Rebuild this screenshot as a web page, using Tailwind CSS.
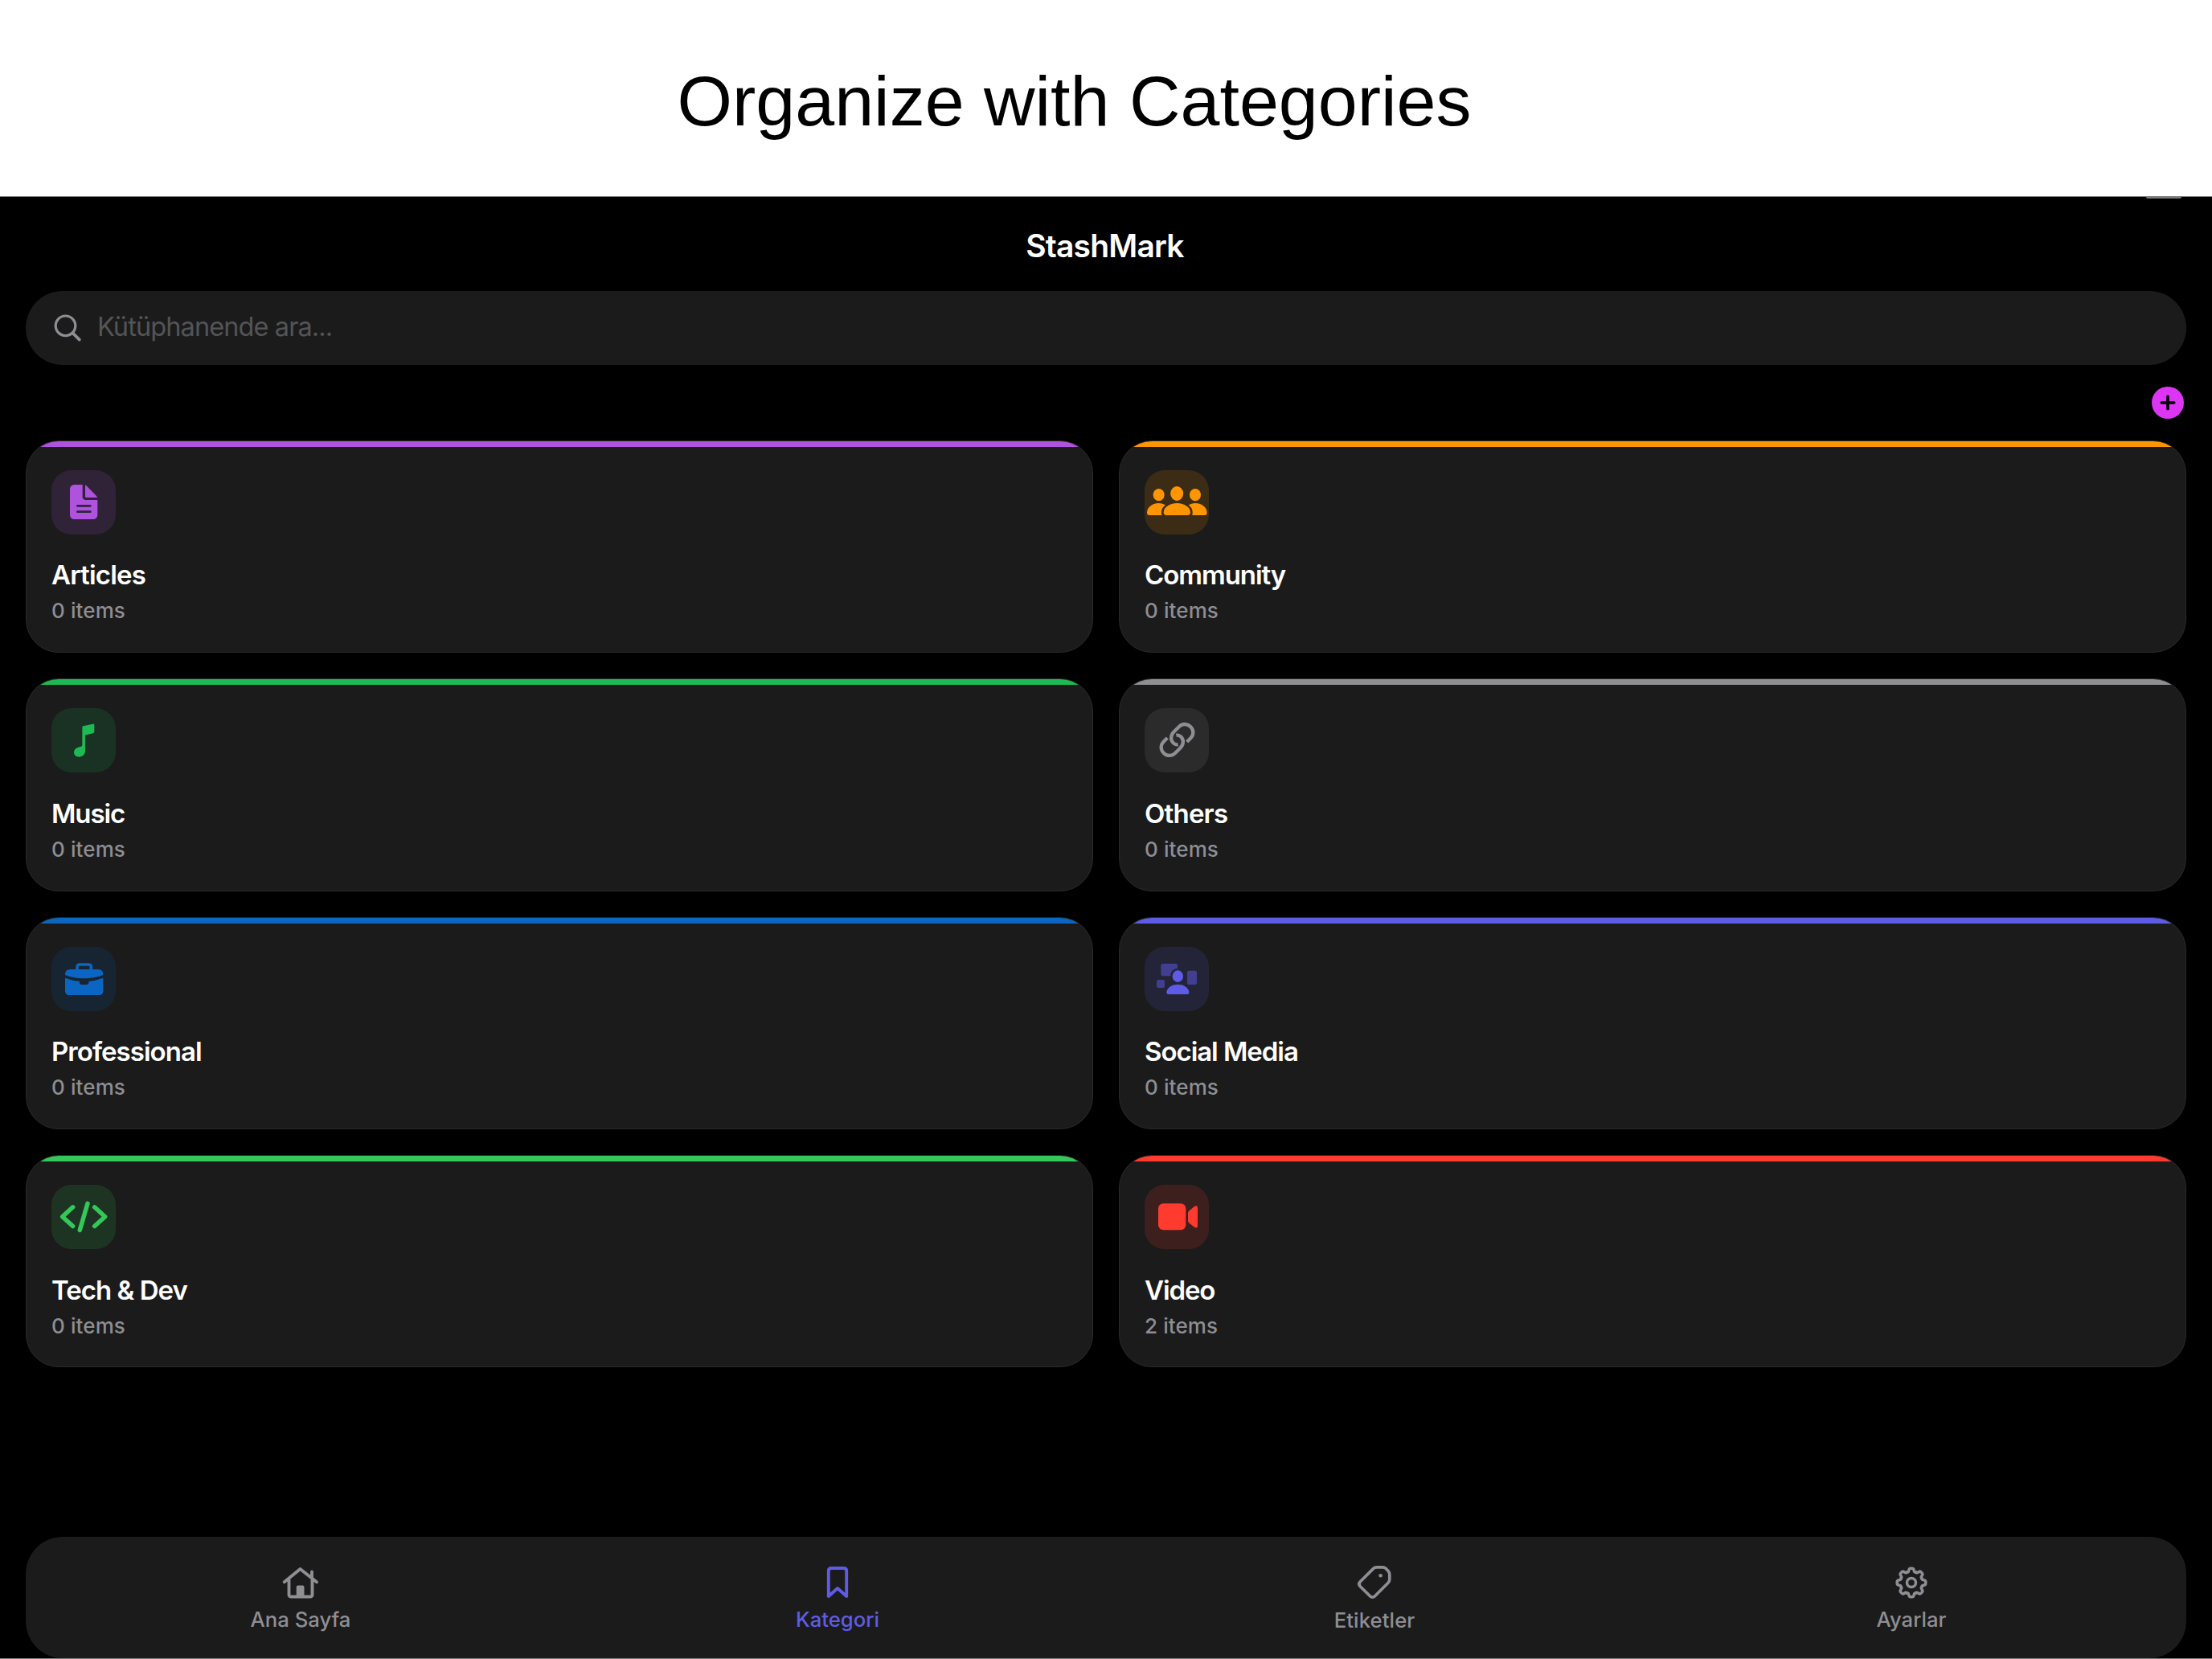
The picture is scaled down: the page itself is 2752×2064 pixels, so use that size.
<!DOCTYPE html>
<html lang="tr">
<head>
<meta charset="utf-8">
<title>StashMark</title>
<script src="https://cdn.jsdelivr.net/npm/@tailwindcss/browser@4"></script>
</head>
<body class="bg-black">
<div class="flex h-[2064px] w-[2752px] flex-col overflow-hidden bg-black font-[Inter,sans-serif] text-white">
  <header class="flex h-[244px] shrink-0 bg-white pt-[76px] pl-[842.5px]">
    <h1 class="font-['Liberation_Sans',sans-serif] text-[88px] leading-[100px] whitespace-nowrap text-black">Organize with Categories</h1>
  </header>
  <div class="flex h-[117.5px] shrink-0 flex-col border-t border-[#7f7f7f]">
    <div class="mr-[38px] h-[2px] w-[44px] shrink-0 self-end rounded-b-[2px] bg-[#7b7b7b]"></div>
    <div class="flex justify-center pt-[35px] pr-[3px] text-[39px] leading-[48px] font-semibold tracking-[-0.8px]">StashMark</div>
  </div>
  <div class="mx-8 flex h-[92px] shrink-0 items-center rounded-[46px] bg-[#1b1b1b] pl-8">
    <svg class="h-[40px] w-[40px]" viewBox="64 388 40 40" fill="none" stroke="#8e8e93" stroke-width="3.2" stroke-linecap="round"><circle cx="81.5" cy="405.3" r="12.3"/><path d="M90.5 414.3 98.8 422.6" stroke-width="3.8"/></svg>
    <span class="-mt-[2px] ml-[17px] text-[32.5px] leading-[40px] tracking-[-0.9px] text-[#545457]">Kütüphanende ara...</span>
  </div>
  <div class="flex h-[94.4px] shrink-0 justify-end pt-[27px] pr-[35px]">
    <svg class="h-[40px] w-[40px]" viewBox="0 0 40 40"><circle cx="20" cy="20" r="20" fill="#dd35f5"/><path d="M20 12.2V27.8M12.2 20H27.8" stroke="#000" stroke-width="3.6" stroke-linecap="round"/></svg>
  </div>
  <main class="mx-8 grid shrink-0 auto-rows-[264.4px] grid-cols-2 gap-8">
    <section class="overflow-hidden rounded-[41px] border border-[#2a2a2b] bg-[#1b1b1b]">
      <div class="h-[7px] bg-[#af52de]"></div>
      <div class="px-[31px] pt-[29px]">
        <div class="h-20 w-20 rounded-[25px] bg-[#af52de]/15">
          <svg class="h-20 w-20" viewBox="132 135 240 240" fill="#af52de"><path d="M248 189H217A16 16 0 0 0 201 205V302A16 16 0 0 0 217 318H288A16 16 0 0 0 304 302V246H260A11 11 0 0 1 248 235Z"/><path d="M258 192Q258 189 261 191L302 233Q305 237 301 237H262Q258 237 258 233Z"/><path d="M229 268H277M229 290H277" stroke="#312338" stroke-width="8" stroke-linecap="round"/></svg>
        </div>
        <h2 class="mt-[30.5px] text-[33px] leading-[40px] font-semibold tracking-[-0.8px]">Articles</h2>
        <p class="mt-[8.5px] text-[26px] leading-[32px] font-medium tracking-[0.1px] text-[#8e8e93]">0 items</p>
      </div>
    </section>
    <section class="overflow-hidden rounded-[41px] border border-[#2a2a2b] bg-[#1b1b1b]">
      <div class="h-[7px] bg-[#ff9500]"></div>
      <div class="px-[31px] pt-[29px]">
        <div class="h-20 w-20 rounded-[25px] bg-[#ff9500]/15">
          <svg class="h-20 w-20" viewBox="132 135 240 240" fill="#ff9500"><ellipse cx="252.5" cy="222" rx="24" ry="27"/><ellipse cx="185" cy="227" rx="21" ry="23"/><ellipse cx="321" cy="227" rx="21" ry="23"/><path d="M203 292C203 274 225 258 253 258C281 258 303 274 303 292C303 299 299 303 293 303H213C207 303 203 299 203 292Z"/><path d="M141 294C141 276 158 258 185 258C195 258 203 261 210 265C198 274 192 286 196 303H150C144 303 141 300 141 294Z"/><path d="M365 294C365 276 348 258 321 258C311 258 303 261 296 265C308 274 314 286 310 303H356C362 303 365 300 365 294Z"/></svg>
        </div>
        <h2 class="mt-[30.5px] text-[33px] leading-[40px] font-semibold tracking-[-1.05px]">Community</h2>
        <p class="mt-[8.5px] text-[26px] leading-[32px] font-medium tracking-[0.1px] text-[#8e8e93]">0 items</p>
      </div>
    </section>
    <section class="overflow-hidden rounded-[41px] border border-[#2a2a2b] bg-[#1b1b1b]">
      <div class="h-[7px] bg-[#1db954]"></div>
      <div class="px-[31px] pt-[29px]">
        <div class="h-20 w-20 rounded-[25px] bg-[#1db954]/15">
          <svg class="h-20 w-20" viewBox="132 136 240 240" fill="#1db954"><path d="M247 208Q247 204 251 203L286 195Q292 194 292 199V224Q292 229 287 230L258 237V296C258 310 247 318 235 318C223 318 216 310 216 301C216 291 223 285 232 282L243 279Q247 278 247 273Z"/></svg>
        </div>
        <h2 class="mt-[31px] text-[33px] leading-[40px] font-semibold tracking-[-1.1px]">Music</h2>
        <p class="mt-[8.5px] text-[26px] leading-[32px] font-medium tracking-[0.1px] text-[#8e8e93]">0 items</p>
      </div>
    </section>
    <section class="overflow-hidden rounded-[41px] border border-[#2a2a2b] bg-[#1b1b1b]">
      <div class="h-[7px] bg-[#8e8e93]"></div>
      <div class="px-[31px] pt-[29px]">
        <div class="h-20 w-20 rounded-[25px] bg-[#8e8e93]/15">
          <svg class="h-20 w-20" viewBox="132 136 240 240" fill="none" stroke="#8e8e93" stroke-width="13"><path d="M290 262 304 248C316 236 316 218 304 206C292 193 273 193 261 205L242 224C228 238 228 256 240 267C245 271 250 273 257 272"/><path d="M217 247 203 261C191 273 191 291 203 303C215 316 234 316 246 304L265 285C279 271 279 253 267 242C262 238 257 236 250 237"/></svg>
        </div>
        <h2 class="mt-[31px] text-[33px] leading-[40px] font-semibold tracking-[-0.8px]">Others</h2>
        <p class="mt-[8.5px] text-[26px] leading-[32px] font-medium tracking-[0.1px] text-[#8e8e93]">0 items</p>
      </div>
    </section>
    <section class="overflow-hidden rounded-[41px] border border-[#2a2a2b] bg-[#1b1b1b]">
      <div class="h-[7px] bg-[#0a66c2]"></div>
      <div class="px-[31px] pt-[29px]">
        <div class="h-20 w-20 rounded-[25px] bg-[#0a66c2]/15">
          <svg class="h-20 w-20" viewBox="132 138 240 240" fill="#0a66c2"><path d="M228 224V213Q228 204 238 204H270Q280 204 280 213V224" fill="none" stroke="#0a66c2" stroke-width="11"/><path d="M183 243V240Q184 222 202 222H306Q324 222 325 240V243Q290 256 253.5 256Q217 256 183 243Z"/><path d="M183 254Q210 264 237 267V271Q237 279 245 279H263Q271 279 271 271V267Q298 264 325 254V302Q325 318 309 318H199Q183 318 183 302Z"/></svg>
        </div>
        <h2 class="mt-[30.5px] text-[33px] leading-[40px] font-semibold tracking-[-0.95px]">Professional</h2>
        <p class="mt-[8.5px] text-[26px] leading-[32px] font-medium tracking-[0.1px] text-[#8e8e93]">0 items</p>
      </div>
    </section>
    <section class="overflow-hidden rounded-[41px] border border-[#2a2a2b] bg-[#1b1b1b]">
      <div class="h-[7px] bg-[#5e5ce6]"></div>
      <div class="px-[31px] pt-[29px]">
        <div class="h-20 w-20 rounded-[25px] bg-[#5e5ce6]/15">
          <svg class="h-20 w-20" viewBox="132 138 240 240" fill="#5e5ce6"><g fill="#423f90"><rect x="193" y="201" width="62" height="46" rx="7"/><rect x="291" y="227" width="36" height="52" rx="7"/><rect x="177" y="261" width="30" height="30" rx="7"/></g><ellipse cx="256" cy="248" rx="28" ry="30" fill="#252339"/><ellipse cx="256" cy="248" rx="20" ry="22"/><path d="M214 305C218 288 236 278 256 278C276 278 294 288 298 305Q299 315 290 315H223Q213 315 214 305Z"/></svg>
        </div>
        <h2 class="mt-[30.5px] text-[33px] leading-[40px] font-semibold tracking-[-1.05px]">Social Media</h2>
        <p class="mt-[8.5px] text-[26px] leading-[32px] font-medium tracking-[0.1px] text-[#8e8e93]">0 items</p>
      </div>
    </section>
    <section class="overflow-hidden rounded-[41px] border border-[#2a2a2b] bg-[#1b1b1b]">
      <div class="h-[7px] bg-[#34c759]"></div>
      <div class="px-[31px] pt-[29px]">
        <div class="h-20 w-20 rounded-[25px] bg-[#34c759]/15">
          <svg class="h-20 w-20" viewBox="132 132.5 240 240" fill="none" stroke="#34c759" stroke-width="16.5" stroke-linecap="round" stroke-linejoin="round"><path d="M212 216 173 251.500 212 287M267 202.500 238 301.500M293 216 332 251.500 293 287"/></svg>
        </div>
        <h2 class="mt-[31px] text-[33px] leading-[40px] font-semibold tracking-[-1px]">Tech &amp; Dev</h2>
        <p class="mt-[8.5px] text-[26px] leading-[32px] font-medium tracking-[0.1px] text-[#8e8e93]">0 items</p>
      </div>
    </section>
    <section class="overflow-hidden rounded-[41px] border border-[#2a2a2b] bg-[#1b1b1b]">
      <div class="h-[7px] bg-[#ff3b30]"></div>
      <div class="px-[31px] pt-[29px]">
        <div class="h-20 w-20 rounded-[25px] bg-[#ff3b30]/15">
          <svg class="h-20 w-20" viewBox="132 132.5 240 240" fill="#ff3b30"><rect x="183" y="202" width="103" height="99" rx="19"/><path d="M294 238Q294 233 298 230L317 214Q330 206 330 220V284Q330 298 317 290L298 275Q294 272 294 267Z"/></svg>
        </div>
        <h2 class="mt-[31px] text-[33px] leading-[40px] font-semibold tracking-[-1.1px]">Video</h2>
        <p class="mt-[8.5px] text-[26px] leading-[32px] font-medium tracking-[0.1px] text-[#8e8e93]">2 items</p>
      </div>
    </section>
  </main>
  <nav class="mx-8 mt-auto grid h-[151px] shrink-0 grid-cols-4 rounded-[46px] bg-[#1b1b1b] px-2 pt-[28px] text-[25.7px] leading-[32px] font-medium text-[#8e8e93]">
    <a class="flex flex-col items-center"><svg class="h-[60px] w-[60px]" viewBox="344 1940 60 60" fill="none" stroke="#8e8e93" stroke-width="3.9" stroke-linecap="round" stroke-linejoin="round"><path d="M353.700 1968.300 373.500 1952 394 1968.300M359.500 1965V1984Q359.500 1986.500 362.500 1986.500H385.500Q388.500 1986.500 388.500 1984V1965M388 1955.500V1962"/><path d="M368.700 1986V1974.500Q368.700 1972.500 370.700 1972.500H376.500Q378.500 1972.500 378.500 1974.500V1986Z" fill="#8e8e93" stroke="none"/></svg><span class="-mt-px">Ana Sayfa</span></a>
    <a class="flex flex-col items-center text-[#5e5ce6]"><svg class="h-[60px] w-[60px]" viewBox="1012 1940 60 60" fill="none" stroke="#5e5ce6" stroke-width="3.9" stroke-linejoin="round"><path d="M1030.800 1986V1954.500Q1030.800 1951 1034.500 1951H1049.500Q1053.200 1951 1053.200 1954.500V1986L1042 1976Z"/></svg><span class="-mt-px">Kategori</span></a>
    <a class="flex flex-col items-center"><svg class="h-[60px] w-[60px]" viewBox="1680 1940 60 60" fill="none" stroke="#8e8e93" stroke-width="3.7" stroke-linejoin="round"><path d="M1713 1949.800H1720Q1722.500 1949.800 1724 1951.300L1727.300 1954.800Q1728.800 1956.500 1728.800 1959V1965Q1728.800 1967.500 1727 1969.300L1710.500 1985.800Q1707.500 1988.300 1704.500 1985.800L1692.300 1973.800Q1689.500 1970.800 1692.300 1967.800L1708.500 1951.600Q1710.300 1949.800 1713 1949.800Z"/><circle cx="1717.600" cy="1960.300" r="2.300" fill="#8e8e93" stroke="none"/></svg><span class="tracking-[0.1px]">Etiketler</span></a>
    <a class="flex flex-col items-center"><svg class="h-[60px] w-[60px]" viewBox="-30 -29 60 60" fill="none" stroke="#8e8e93" stroke-width="3.5" stroke-linejoin="round" stroke-linecap="round"><circle r="5.500"/><defs><path id="tooth" d="M-5.400-13.100C-4-12.500-3.500-13.700-3.200-15.200Q-2.800-17.800-1-17.800H1Q2.800-17.800 3.200-15.200C3.500-13.700 4-12.500 5.400-13.100"/></defs><use href="#tooth"/><use href="#tooth" transform="rotate(45)"/><use href="#tooth" transform="rotate(90)"/><use href="#tooth" transform="rotate(135)"/><use href="#tooth" transform="rotate(180)"/><use href="#tooth" transform="rotate(225)"/><use href="#tooth" transform="rotate(270)"/><use href="#tooth" transform="rotate(315)"/></svg><span class="-mt-px">Ayarlar</span></a>
  </nav>
  <div class="h-px shrink-0 bg-[#7f7f7f]"></div>
</div>
</body>
</html>
